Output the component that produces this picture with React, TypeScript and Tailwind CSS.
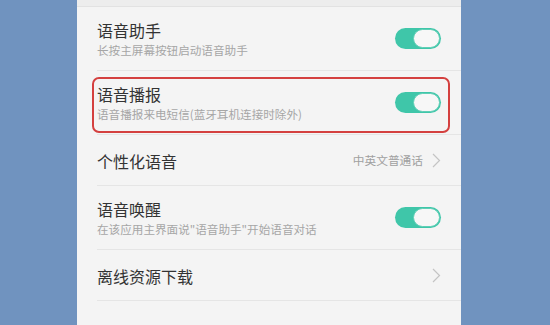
import React from 'react';

type Row = {
  title: string;
  sub?: string;
  toggle?: boolean;
  value?: string;
  arrow?: boolean;
  marked?: boolean;
};

const rows: Row[] = [
  { title: '语音助手', sub: '长按主屏幕按钮启动语音助手', toggle: true },
  { title: '语音播报', sub: '语音播报来电短信(蓝牙耳机连接时除外)', toggle: true, marked: true },
  { title: '个性化语音', value: '中英文普通话', arrow: true },
  { title: '语音唤醒', sub: '在该应用主界面说"语音助手"开始语音对话', toggle: true },
  { title: '离线资源下载', arrow: true },
];

const Toggle = () => (
  <div className="flex h-[21px] w-[46px] items-center justify-end rounded-full bg-[#3fc6a9] p-[1px]">
    <div className="h-[19px] w-[27px] rounded-full border border-[#5fcfb6] bg-[#f7f7f7]" />
  </div>
);

const Chevron = () => (
  <svg width="9" height="15" viewBox="0 0 9 15" fill="none">
    <path d="M1 1l6.5 6.5L1 14" stroke="#c4c4c4" strokeWidth="1.2" />
  </svg>
);

export default function App() {
  return (
    <div
      className="flex h-[325px] w-[550px] bg-[#7093bf]"
      style={{ fontFamily: '"Noto Sans CJK SC", "Noto Sans", sans-serif' }}
    >
      <div className="ml-[77px] flex h-full w-[384px] flex-col bg-[#f4f4f4]">
        <div className="h-[7px] border-b border-[#e2e2e2] bg-[#ededed]" />
        {rows.map((row) => (
          <div
            key={row.title}
            className={`relative ml-[20px] flex items-center border-b border-[#e5e5e5] pr-[20px] ${
              row.sub ? 'h-[64px]' : 'h-[51px]'
            }`}
          >
            {row.marked && (
              <div className="absolute top-[6px] bottom-[1px] left-[-5px] right-[11px] rounded-[7px] border-2 border-[#d4403f]" />
            )}
            <div className={`flex flex-1 flex-col ${row.sub ? 'pt-[1px]' : 'pt-[2px]'}`}>
              <span className="text-[16px] leading-[20px] text-[#333333]">{row.title}</span>
              {row.sub && (
                <span className="mt-[2px] text-[11.6px] leading-[16px] text-[#a6a6a6]">{row.sub}</span>
              )}
            </div>
            {row.toggle && <Toggle />}
            {row.value && (
              <span className="mr-[9px] text-[11.7px] text-[#a0a0a0]">{row.value}</span>
            )}
            {row.arrow && <Chevron />}
          </div>
        ))}
      </div>
    </div>
  );
}
